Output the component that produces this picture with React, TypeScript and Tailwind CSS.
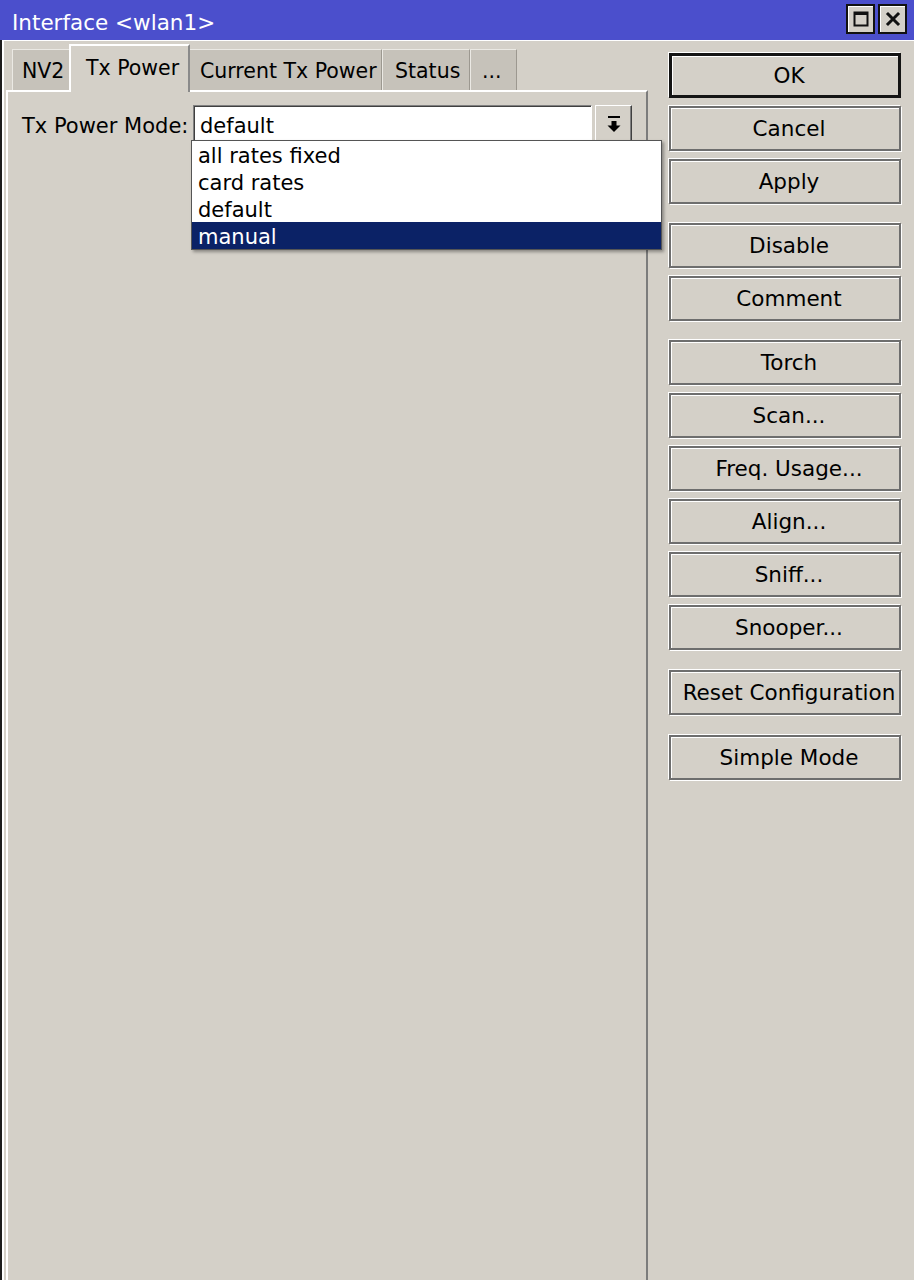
import React from 'react';

const MODES = ['all rates fixed', 'card rates', 'default', 'manual'];

interface ActionButtonProps {
  label: string;
  isDefault?: boolean;
  className?: string;
}

// raised button used in the right-hand action column
const ActionButton: React.FC<ActionButtonProps> = ({ label, isDefault, className }) => {
  const frame = isDefault
    ? 'border-[3px] border-[#141414] shadow-[inset_1px_1px_0_#ffffff,-1px_-1px_0_#ffffff]'
    : 'border-2 border-[#6e6e6e] shadow-[inset_1px_1px_0_#ffffff,1px_1px_0_#ffffff,-1px_-1px_0_#ffffff]';
  return (
    <div
      className={`h-[45px] w-[232px] flex items-center justify-center whitespace-nowrap text-[21.5px] text-black bg-[#d4d0c8] pt-[2px] ${frame} ${className ?? ''}`}
    >
      <span className="pl-[8px]">{label}</span>
    </div>
  );
};

const TitleButton: React.FC<{ kind: 'max' | 'close' }> = ({ kind }) => (
  <div className="w-[29px] h-[30px] bg-[#d4d0c8] border-2 border-[#111111] shadow-[inset_1px_1px_0_#ffffff] flex items-center justify-center">
    {kind === 'max' ? (
      <svg width="16" height="16" viewBox="0 0 16 16">
        <rect x="1.5" y="1.5" width="13" height="13" fill="none" stroke="#111" strokeWidth="2" />
        <rect x="1" y="1" width="14" height="3" fill="#111" />
      </svg>
    ) : (
      <svg width="16" height="16" viewBox="0 0 16 16">
        <path d="M3 3 L13 13 M13 3 L3 13" stroke="#111" strokeWidth="3" strokeLinecap="square" />
      </svg>
    )}
  </div>
);

const DropArrow: React.FC = () => (
  <svg width="16" height="20" viewBox="0 0 16 20">
    <rect x="2" y="1" width="12" height="2" fill="#000" />
    <rect x="5.5" y="6" width="5" height="5" fill="#000" />
    <polygon points="1.5,10.5 14.5,10.5 8,17" fill="#000" />
  </svg>
);

export default function App() {
  return (
    <div className="w-[914px] h-[1280px] overflow-hidden flex flex-col bg-[#d4d0c8] font-['DejaVu_Sans',sans-serif] text-black">
      {/* title bar */}
      <div className="h-[40px] shrink-0 bg-[#4b4fcc] flex items-center pl-[12px] pr-[7px]">
        <span className="text-white text-[21.5px] pt-[6px]">{'Interface <wlan1>'}</span>
        <div className="ml-auto flex gap-[3px] -mt-[2px]">
          <TitleButton kind="max" />
          <TitleButton kind="close" />
        </div>
      </div>

      <div className="flex-1 flex border-l-2 border-[#1c1c1c] shadow-[inset_2px_1px_0_#ffffff]">
        {/* tabs + page */}
        <div className="w-[642px] ml-[4px] pt-[4px] flex flex-col">
          <div className="h-[48px] pl-[6px] flex items-end relative z-10 -mb-[2px]">
            <div className="w-[57px] h-[41px] mb-[2px] bg-[#c6c2ba] border-t border-l border-t-[#ebe9e4] border-l-[#ebe9e4] flex items-center pl-[9px] pt-[3px] text-[20.5px]">
              NV2
            </div>
            <div className="w-[121px] h-[48px] bg-[#d4d0c8] border-t-2 border-l-2 border-r-2 border-t-white border-l-white border-r-[#8a8a8a] flex items-center pl-[15px] pb-[1px] text-[20.5px]">
              Tx Power
            </div>
            <div className="w-[192px] h-[41px] mb-[2px] bg-[#c6c2ba] border-t border-r border-t-[#ebe9e4] border-r-[#9c9890] flex items-center pl-[10px] pt-[3px] text-[20.5px] whitespace-nowrap overflow-hidden">
              Current Tx Power
            </div>
            <div className="w-[88px] h-[41px] mb-[2px] bg-[#c6c2ba] border-t border-l border-r border-t-[#ebe9e4] border-l-[#ebe9e4] border-r-[#9c9890] flex items-center pl-[12px] pt-[3px] text-[20.5px]">
              Status
            </div>
            <div className="w-[47px] h-[41px] mb-[2px] bg-[#c6c2ba] border-t border-l border-r border-t-[#ebe9e4] border-l-[#ebe9e4] border-r-[#9c9890] flex items-center pl-[11px] pt-[3px] text-[20.5px]">
              ...
            </div>
          </div>

          <div className="flex-1 border-t-2 border-l-2 border-r-2 border-t-white border-l-white border-r-[#7c7c7c] pt-[13px] pl-[14px]">
            <div className="relative flex items-center h-[39px]">
              <div className="w-[171px] text-[21px] whitespace-nowrap pt-[5px]">Tx Power Mode:</div>
              <div className="w-[399px] h-[39px] bg-white border border-t-[#808080] border-l-[#808080] border-b-white border-r-white shadow-[inset_1px_1px_0_#404040] flex items-center pl-[6px] pt-[5px] text-[21px]">
                default
              </div>
              <div className="ml-[3px] w-[37px] h-[39px] bg-[#d4d0c8] border border-t-white border-l-white border-b-[#404040] border-r-[#404040] shadow-[inset_-1px_-1px_0_#808080] flex items-center justify-center">
                <DropArrow />
              </div>

              {/* open option list */}
              <div className="absolute left-[169px] top-[35px] w-[471px] bg-white border border-[#555555] shadow-[2px_2px_3px_rgba(0,0,0,0.35)] z-20">
                {MODES.map((mode) => (
                  <div
                    key={mode}
                    className={`h-[27px] flex items-center pl-[6px] pt-[4px] text-[21px] ${
                      mode === 'manual' ? 'bg-[#0b2266] text-white' : 'text-black'
                    }`}
                  >
                    {mode}
                  </div>
                ))}
              </div>
            </div>
          </div>
        </div>

        {/* action column */}
        <div className="ml-[21px] pt-[13px] flex flex-col">
          <ActionButton label="OK" isDefault />
          <ActionButton label="Cancel" className="mt-[8px]" />
          <ActionButton label="Apply" className="mt-[8px]" />

          <ActionButton label="Disable" className="mt-[19px]" />
          <ActionButton label="Comment" className="mt-[8px]" />

          <ActionButton label="Torch" className="mt-[19px]" />
          <ActionButton label="Scan..." className="mt-[8px]" />
          <ActionButton label="Freq. Usage..." className="mt-[8px]" />
          <ActionButton label="Align..." className="mt-[8px]" />
          <ActionButton label="Sniff..." className="mt-[8px]" />
          <ActionButton label="Snooper..." className="mt-[8px]" />

          <ActionButton label="Reset Configuration" className="mt-[20px]" />
          <ActionButton label="Simple Mode" className="mt-[20px]" />
        </div>
      </div>
    </div>
  );
}
